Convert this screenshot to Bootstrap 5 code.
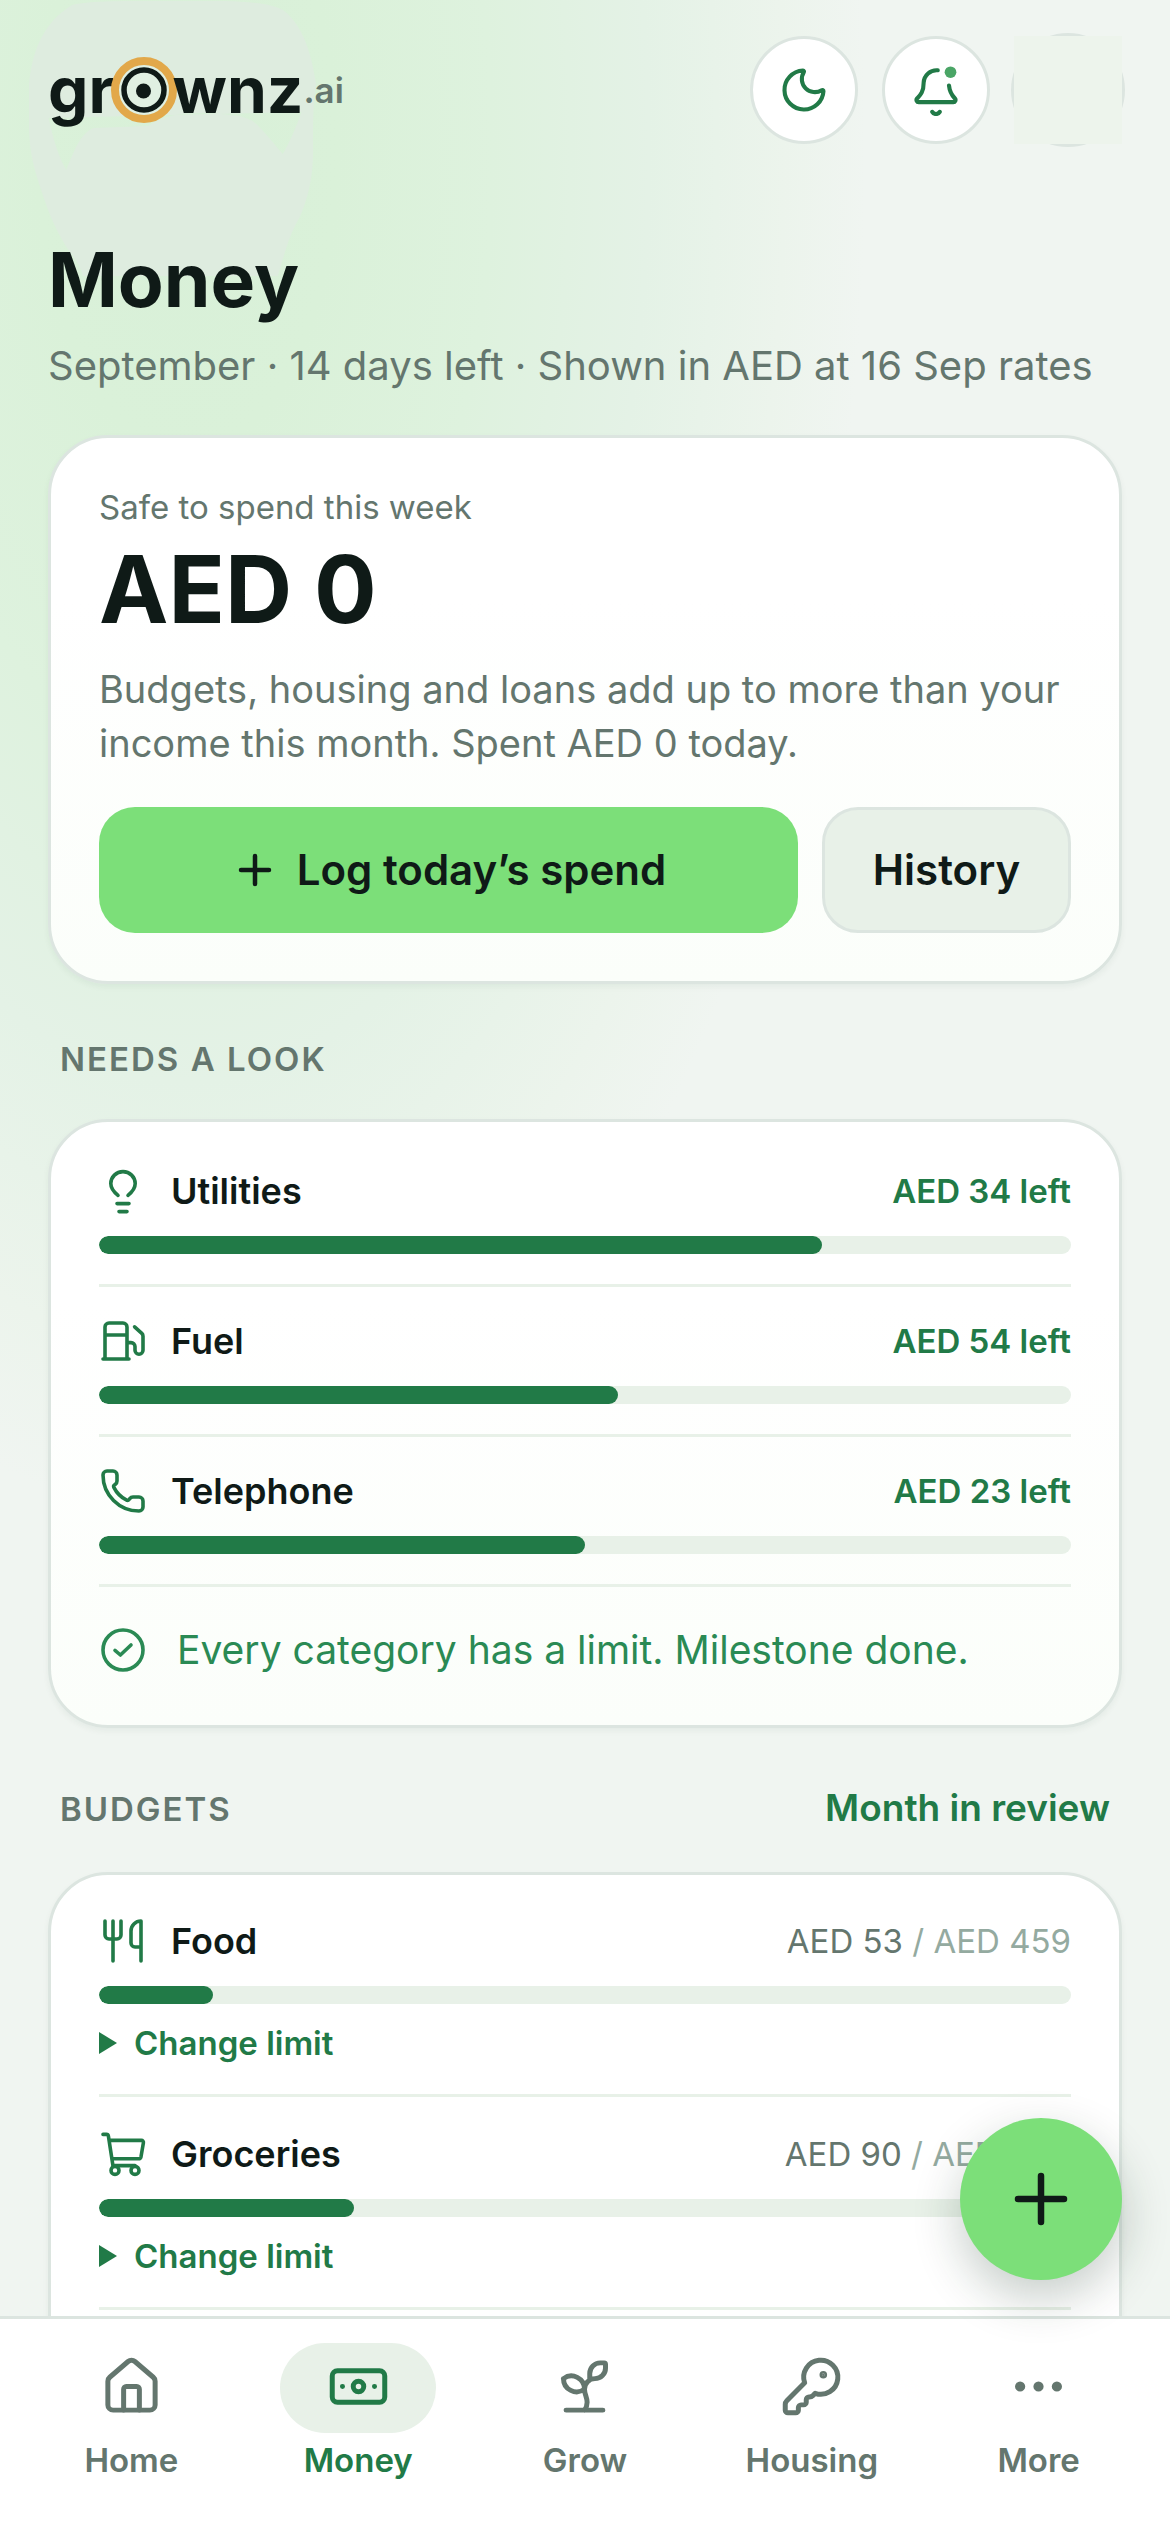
<!DOCTYPE html>
<html lang="en">
<head>
<meta charset="utf-8">
<meta name="viewport" content="width=device-width, initial-scale=1">
<title>Money · grownz.ai</title>
<link href="https://cdn.jsdelivr.net/npm/bootstrap@5.3.0/dist/css/bootstrap.min.css" rel="stylesheet">
<style>
:root{--ink:#0f1a17;--muted-ink:#64766e;--faint:#94aaa0;--brand:#217a47;--lime:#7cdf79;--line:#dce5e0;--soft:#e8f1e8;--page:#f0f5f1}
body{font-family:Inter,"Liberation Sans",sans-serif;color:var(--ink);background:var(--page)}
button,summary{font-family:inherit}
.app{background:radial-gradient(ellipse 58% 54% at 16% 6%,#d8f0d8 0%,#daf1d9 22%,#def2de 45%,#e4f2e6 68%,#ecf4ec 88%,#f0f5f1 100%)}
.scroller{overflow-y:auto;scrollbar-width:none;padding:36px 48px 0}
.scroller::-webkit-scrollbar{display:none}
svg{display:block;flex:none}
.line-icon{fill:none;stroke:currentColor;stroke-linecap:round;stroke-linejoin:round}
.glow{left:29px;top:0;width:288px;height:276px;z-index:0}
.brand-mark{font-size:64px;line-height:72px;font-weight:700;color:var(--ink);height:108px}
.brand-mark .tld{font-size:35px;line-height:48px;font-weight:600;color:var(--muted-ink)}
.brand-o{width:66px;height:66px;margin:0 -4px 0 -4px}
.round-btn{width:108px;height:108px;border:3px solid var(--line);background:#fff;color:var(--brand)}
.round-btn svg{width:52px;height:52px;stroke-width:1.9}
.avatar-btn{width:108px;height:108px;border-radius:50%;box-shadow:0 0 0 3px var(--line);background:none}
.avatar-btn span{width:108px;height:108px;background:#edf4ec}
.page-title{font-size:75px;line-height:84px;font-weight:700;margin:94px 0 14px}
.page-sub{font-size:40px;line-height:60px;color:var(--muted-ink);margin:0 0 39px}
.panel{border:3px solid var(--line);border-radius:60px;background:linear-gradient(#fff 0%,#fff 30%,#fbfefa 100%);box-shadow:0 3px 6px rgba(20,60,40,.05);padding:0 48px}
.hero{padding:45px 48px 48px}
.hero-actions{margin-top:37px}
.t-sm{font-size:33px;line-height:48px}
.t-md{font-size:38px;line-height:54px}
.amount{font-size:93px;line-height:105px;font-weight:700;margin:6px 0 20px}
.act{height:126px;border-radius:36px;font-size:42px;line-height:60px;font-weight:600;color:var(--ink);gap:18px}
.act-main{background:var(--lime)}
.act-alt{background:var(--soft);border:3px solid var(--line);width:249px}
.section-head{margin:51px 12px 36px}
.section-head h2{font-size:33px;line-height:48px;font-weight:600;letter-spacing:2px;color:var(--muted-ink);margin:0}
.section-head a{font-size:37px;line-height:57px;font-weight:600}
.c-muted{color:var(--muted-ink)}
.c-faint{color:var(--faint)}
.c-brand{color:var(--brand)}
.look{padding-top:15px;padding-bottom:12px}
.look .item{padding-top:30px;padding-bottom:30px}
.item{border-bottom:3px solid var(--soft)}
.item-head{height:48px;margin-bottom:21px}
.item-head svg,.done-row svg{width:48px;height:48px;color:var(--brand);stroke-width:1.8}
.item-name{font-size:36px;line-height:48px;font-weight:600}
.meter{height:18px;border-radius:9px;background:var(--soft)}
.meter .progress-bar{border-radius:9px;background:var(--brand)}
.done-row{padding:39px 0;gap:30px;color:#2a8a54}
.done-row svg{color:inherit}
.done-row p{font-size:39px;line-height:48px}
.budgets{padding-top:9px;padding-bottom:120px;margin-bottom:48px;background:#fff}
.budgets .item{padding-top:33px;padding-bottom:27px}
.limit{margin-top:15px}
.limit summary{list-style:none;font-weight:600;color:var(--brand)}
.limit summary::-webkit-details-marker{display:none}
.limit summary::before{content:"";border-left:18px solid var(--brand);border-top:11px solid transparent;border-bottom:11px solid transparent;margin-right:17px}
.fab{right:48px;bottom:252px;width:162px;height:162px;background:var(--lime);color:var(--ink);box-shadow:0 18px 48px rgba(15,45,30,.24);z-index:3}
.tabs{border-top:3px solid var(--line);background:#fff;padding:24px 18px 51px}
.tabs a{color:var(--muted-ink);font-size:33px;line-height:42px;font-weight:600;gap:6px}
.tabs .pill{width:156px;height:90px;border-radius:45px;padding-bottom:3px}
.tabs .pill svg{width:63px;height:63px;stroke-width:1.9}
.tabs .on{color:var(--brand)}
.tabs .on .pill{background:var(--soft)}
</style>
</head>
<body>
<div class="app vh-100 d-flex flex-column position-relative overflow-hidden">
  <svg class="glow position-absolute" viewBox="0 0 294 276" preserveAspectRatio="none" aria-hidden="true"><path fill="#deecdf" fill-rule="evenodd" d="M44 5C60 1 90 1 130 1H200C225 2 250 3 262 12C280 28 288 52 293 84C290 104 290 120 290 150C290 180 284 200 276 218C266 234 262 250 254 276H55C50 258 42 255 34 240C22 220 14 196 6 170C-1 145 -1 120 0 84C3 55 12 24 44 5ZM20 118C26 145 32 160 38 170C43 160 50 134 66 128L122 126C140 112 170 112 196 114C214 116 226 116 236 128C244 136 252 146 259 154C264 146 272 130 278 112Z"/></svg>
  <main class="scroller flex-fill position-relative">
    <header class="d-flex align-items-center justify-content-between">
      <a href="#" class="brand-mark d-flex align-items-center text-decoration-none" aria-label="grownz.ai"><span>gr</span><svg class="brand-o" viewBox="0 0 66 66" aria-hidden="true"><circle cx="33" cy="33" r="29" fill="#e0f0e2" stroke="#e2a84a" stroke-width="8"/><circle cx="33" cy="33" r="20" fill="none" stroke="#0f1a17" stroke-width="5.500"/><circle cx="32.500" cy="34" r="7.500" fill="#0f1a17"/></svg><span>wnz</span><span class="tld">.ai</span></a>
      <div class="d-flex gap-4">
        <button type="button" class="round-btn rounded-circle d-flex align-items-center justify-content-center p-0" aria-label="Dark mode"><svg class="line-icon" viewBox="0 0 24 24"><path d="M20.985 12.486a9 9 0 1 1-9.473-9.472c.405-.022.617.46.402.803a6 6 0 0 0 8.268 8.268c.344-.215.825-.004.803.401"/></svg></button>
        <button type="button" class="round-btn rounded-circle d-flex align-items-center justify-content-center p-0" aria-label="Notifications"><svg class="line-icon" viewBox="0 0 24 24"><g transform="translate(0 .6)"><path d="M10.268 21.500a2 2 0 0 0 3.464 0M12.800 2.300A6 6 0 0 0 6.300 8c0 4.499-1.711 5.956-3.040 7.327A1 1 0 0 0 4 17h16a1 1 0 0 0 .74-1.673C19.500 14 18.300 12.500 18 9.300"/><circle cx="18.700" cy="3.200" r="2.700" fill="#4aa566" stroke="none"/></g></svg></button>
        <button type="button" class="avatar-btn border-0 p-0" aria-label="Profile"><span class="d-block"></span></button>
      </div>
    </header>

    <h1 class="page-title">Money</h1>
    <p class="page-sub">September · 14 days left · Shown in AED at 16 Sep rates</p>

    <section class="panel hero">
      <p class="t-sm c-muted mb-0">Safe to spend this week</p>
      <p class="amount">AED 0</p>
      <p class="t-md c-muted mb-0">Budgets, housing and loans add up to more than your income this month. Spent AED 0 today.</p>
      <div class="d-flex gap-4 hero-actions">
        <button type="button" class="btn act act-main border-0 flex-fill d-flex align-items-center justify-content-center p-0"><svg class="line-icon" width="48" height="48" viewBox="0 0 48 48" stroke-width="4.500"><path d="M24 10v28M10 24h28"/></svg>Log today’s spend</button>
        <button type="button" class="btn act act-alt p-0">History</button>
      </div>
    </section>

    <div class="section-head"><h2>NEEDS A LOOK</h2></div>
    <section class="panel look">
      <div class="item">
        <div class="item-head d-flex align-items-center gap-4">
          <svg class="line-icon" viewBox="0 0 24 24"><path d="M9.500 14.200C7.500 12.600 5.900 11 5.900 8.300a6.100 6 0 0 1 12.200 0c0 2.700-1.600 4.300-3.600 5.900M9 18.300h6M10 22.300h4"/></svg>
          <span class="item-name">Utilities</span><span class="t-sm fw-semibold c-brand ms-auto">AED 34 left</span>
        </div>
        <div class="progress meter" role="progressbar" aria-label="Utilities" aria-valuenow="74" aria-valuemin="0" aria-valuemax="100"><div class="progress-bar" style="width:74.4%"></div></div>
      </div>
      <div class="item">
        <div class="item-head d-flex align-items-center gap-4">
          <svg class="line-icon" viewBox="0 0 24 24"><path d="M2 21h13M3 9h11M14 21V5a2 2 0 0 0-2-2H5a2 2 0 0 0-2 2v16M14 12.800h2a2 2 0 0 1 2 2v1.800a2 2 0 0 0 4 0V9.600a2 2 0 0 0-.6-1.400L17.800 4.900"/></svg>
          <span class="item-name">Fuel</span><span class="t-sm fw-semibold c-brand ms-auto">AED 54 left</span>
        </div>
        <div class="progress meter" role="progressbar" aria-label="Fuel" aria-valuenow="53" aria-valuemin="0" aria-valuemax="100"><div class="progress-bar" style="width:53.4%"></div></div>
      </div>
      <div class="item">
        <div class="item-head d-flex align-items-center gap-4">
          <svg class="line-icon" viewBox="0 0 24 24"><path d="M13.832 16.568a1 1 0 0 0 1.213-.303l.355-.465A2 2 0 0 1 17 15h3a2 2 0 0 1 2 2v3a2 2 0 0 1-2 2A18 18 0 0 1 2 4a2 2 0 0 1 2-2h3a2 2 0 0 1 2 2v3a2 2 0 0 1-.8 1.600l-.468.351a1 1 0 0 0-.292 1.233 14 14 0 0 0 6.392 6.384"/></svg>
          <span class="item-name">Telephone</span><span class="t-sm fw-semibold c-brand ms-auto">AED 23 left</span>
        </div>
        <div class="progress meter" role="progressbar" aria-label="Telephone" aria-valuenow="50" aria-valuemin="0" aria-valuemax="100"><div class="progress-bar" style="width:50%"></div></div>
      </div>
      <div class="done-row d-flex align-items-center">
        <svg class="line-icon" viewBox="0 0 24 24"><circle cx="12" cy="12" r="10"/><path d="m8 12.200 2.700 2.300 5.300-5"/></svg>
        <p class="mb-0">Every category has a limit. Milestone done.</p>
      </div>
    </section>

    <div class="section-head d-flex align-items-baseline justify-content-between"><h2>BUDGETS</h2><a href="#" class="c-brand text-decoration-none">Month in review</a></div>
    <section class="panel budgets">
      <div class="item">
        <div class="item-head d-flex align-items-center gap-4">
          <svg class="line-icon" viewBox="0 0 24 24"><path d="M3 2v7c0 1.100.9 2 2 2h4a2 2 0 0 0 2-2V2M7 2v20M21 15V2a5 5 0 0 0-5 5v6c0 1.100.9 2 2 2h3Zm0 0v7"/></svg>
          <span class="item-name">Food</span><span class="t-sm c-muted ms-auto">AED 53 <span class="c-faint">/ AED 459</span></span>
        </div>
        <div class="progress meter" role="progressbar" aria-label="Food" aria-valuenow="53" aria-valuemin="0" aria-valuemax="459"><div class="progress-bar" style="width:11.7%"></div></div>
        <details class="limit"><summary class="t-sm d-flex align-items-center">Change limit</summary></details>
      </div>
      <div class="item">
        <div class="item-head d-flex align-items-center gap-4">
          <svg class="line-icon" viewBox="0 0 24 24"><path d="M2 2.200h1.700a1 1 0 0 1 1 .8L7 18M5 5.200h16.200a1 1 0 0 1 1 1.200l-1.200 7a1.300 1.300 0 0 1-1.300 1H6.500M7 17.800h11"/><circle cx="8" cy="20.200" r="2"/><circle cx="18" cy="20.200" r="2"/></svg>
          <span class="item-name">Groceries</span><span class="t-sm c-muted ms-auto">AED 90 <span class="c-faint">/ AED 344</span></span>
        </div>
        <div class="progress meter" role="progressbar" aria-label="Groceries" aria-valuenow="90" aria-valuemin="0" aria-valuemax="344"><div class="progress-bar" style="width:26.2%"></div></div>
        <details class="limit"><summary class="t-sm d-flex align-items-center">Change limit</summary></details>
      </div>
    </section>
  </main>

  <button type="button" class="fab btn rounded-circle border-0 p-0 position-absolute d-flex align-items-center justify-content-center" aria-label="Add"><svg class="line-icon" width="54" height="54" viewBox="0 0 54 54" stroke-width="6.500"><path d="M27 4v46M4 27h46"/></svg></button>

  <nav class="tabs d-flex" aria-label="Main">
    <a href="#" class="d-flex flex-column align-items-center text-decoration-none col"><span class="pill d-flex align-items-center justify-content-center"><svg class="line-icon" viewBox="0 0 24 24"><path d="M15 21v-8a1 1 0 0 0-1-1h-4a1 1 0 0 0-1 1v8"/><path d="M3 10a2 2 0 0 1 .709-1.528l7-6a2 2 0 0 1 2.582 0l7 6A2 2 0 0 1 21 10v9a2 2 0 0 1-2 2H5a2 2 0 0 1-2-2z"/></svg></span>Home</a>
    <a href="#" class="on d-flex flex-column align-items-center text-decoration-none col" aria-current="page"><span class="pill d-flex align-items-center justify-content-center"><svg class="line-icon" viewBox="0 0 24 24"><rect x="2" y="6" width="20" height="12" rx="2"/><circle cx="12" cy="12" r="2"/><path d="M5.900 12h.01M18.100 12h.01"/></svg></span>Money</a>
    <a href="#" class="d-flex flex-column align-items-center text-decoration-none col"><span class="pill d-flex align-items-center justify-content-center"><svg class="line-icon" viewBox="0 0 24 24"><path d="M14 9.536V7a4 4 0 0 1 4-4h1.500a.5.5 0 0 1 .5.5V5a4 4 0 0 1-4 4 4 4 0 0 0-4 4c0 2 1 3 1 5a5 5 0 0 1-1 3M4 9a5 5 0 0 1 8 4 5 5 0 0 1-8-4M5 21h14"/></svg></span>Grow</a>
    <a href="#" class="d-flex flex-column align-items-center text-decoration-none col"><span class="pill d-flex align-items-center justify-content-center"><svg class="line-icon" viewBox="0 0 24 24"><path d="M2.586 17.414A2 2 0 0 0 2 18.828V21a1 1 0 0 0 1 1h3a1 1 0 0 0 1-1v-1a1 1 0 0 1 1-1h1a1 1 0 0 0 1-1v-1a1 1 0 0 1 1-1h.172a2 2 0 0 0 1.414-.586l.814-.814a6.500 6.500 0 1 0-4-4z"/><circle cx="16.500" cy="7.500" r=".5" fill="currentColor"/></svg></span>Housing</a>
    <a href="#" class="d-flex flex-column align-items-center text-decoration-none col"><span class="pill d-flex align-items-center justify-content-center"><svg class="line-icon" viewBox="0 0 24 24"><g fill="currentColor"><circle cx="5" cy="12" r="1"/><circle cx="12" cy="12" r="1"/><circle cx="19" cy="12" r="1"/></g></svg></span>More</a>
  </nav>
</div>
<script src="https://cdn.jsdelivr.net/npm/bootstrap@5.3.0/dist/js/bootstrap.bundle.min.js"></script>
</body>
</html>
